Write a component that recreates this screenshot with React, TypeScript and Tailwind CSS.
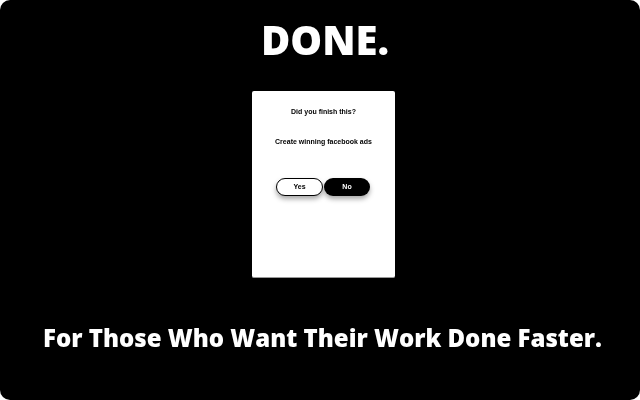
export default function App() {
  return (
    <div className="w-[640px] h-[400px] bg-white overflow-hidden">
      <div className="w-full h-full bg-black rounded-[10px] flex flex-col items-center font-['Open_Sans',sans-serif] text-white">
        <h1 className="mt-[13px] ml-[11px] text-[40px] leading-[54px] font-extrabold will-change-transform">DONE.</h1>
        <div className="mt-[24px] ml-[7px] w-[143px] h-[187px] bg-white rounded-[2px] flex flex-col items-center text-black font-['Liberation_Sans',sans-serif] text-[7px] leading-[10px] font-bold border-b border-[#999] will-change-transform">
          <p className="mt-[16px]">Did you finish this?</p>
          <p className="mt-[20px]">Create winning facebook ads</p>
          <div className="mt-[31px] mr-[1px] flex gap-[1px]">
            <button className="w-[47px] h-[18px] rounded-full bg-white border-[1.5px] border-black shadow-[0_3px_5px_rgba(0,0,0,0.35)] font-bold">Yes</button>
            <button className="w-[46px] h-[18px] rounded-full bg-black text-white shadow-[0_3px_5px_rgba(0,0,0,0.35)] font-bold">No</button>
          </div>
        </div>
        <p className="mt-[43px] ml-[5px] text-[24px] leading-[33px] font-extrabold whitespace-nowrap will-change-transform">For Those Who Want Their Work Done Faster.</p>
      </div>
    </div>
  );
}
